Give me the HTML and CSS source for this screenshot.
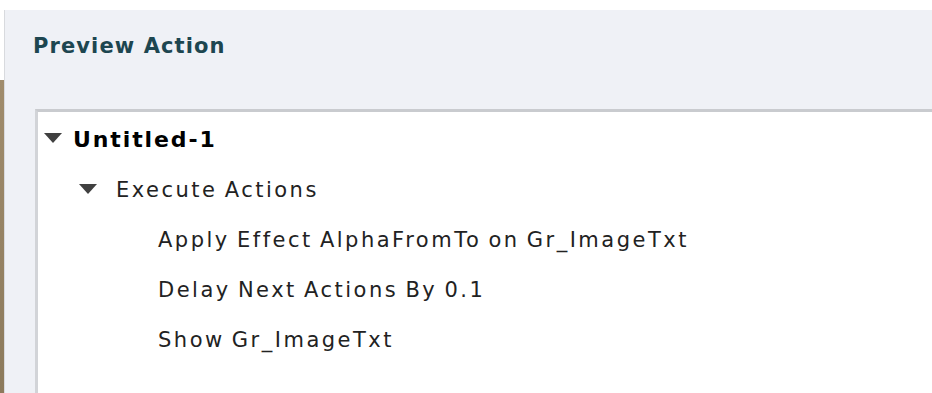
FILE: index.html
```html
<!DOCTYPE html>
<html lang="en">
<head>
  <meta charset="UTF-8">
  <title>Preview Action</title>
  <link rel="stylesheet" href="styles.css">
</head>
<body>
  <div class="edge"></div>
  <div class="panel">
    <h2 class="title">Preview Action</h2>
    <div class="tree">
      <div class="node root">
        <span class="caret"></span>
        <span class="label">Untitled-1</span>
      </div>
      <div class="node group">
        <span class="caret"></span>
        <span class="label">Execute Actions</span>
      </div>
      <div class="node leaf"><span class="label">Apply Effect AlphaFromTo on Gr_ImageTxt</span></div>
      <div class="node leaf"><span class="label">Delay Next Actions By 0.1</span></div>
      <div class="node leaf"><span class="label">Show Gr_ImageTxt</span></div>
    </div>
  </div>
</body>
</html>
```

FILE: styles.css
```css
html, body {
  margin: 0;
  height: 100%;
  overflow: hidden;
}
body {
  display: flex;
  background: #fff;
  font-family: "DejaVu Sans", Verdana, sans-serif;
}
.edge {
  width: 4px;
  margin-top: 80px;
  background: linear-gradient(#a08c6c, #8c7a5c);
  flex-shrink: 0;
}
.panel {
  flex: 1;
  margin-top: 10px;
  border-left: 1px solid #d8dade;
  background: #eff1f6;
  padding-left: 30px;
  display: flex;
  flex-direction: column;
}
.title {
  margin: 0 0 0 -2px;
  padding-top: 24px;
  height: 99px;
  box-sizing: border-box;
  font-size: 21px;
  line-height: 24px;
  letter-spacing: 1.1px;
  font-weight: bold;
  color: #1d4650;
}
.tree {
  flex: 1;
  background: #fff;
  border-top: 3px solid #c9cbcf;
  border-left: 3px solid #d2d4d8;
  padding-top: 3px;
}
.node {
  display: flex;
  align-items: center;
  height: 50px;
  line-height: 50px;
  font-size: 21px;
  letter-spacing: 2.5px;
  word-spacing: -2px;
  color: #222;
}
.caret {
  width: 0;
  height: 0;
  border-left: 9px solid transparent;
  border-right: 9px solid transparent;
  border-top: 10px solid #404040;
}
.root {
  padding-left: 6px;
}
.root .caret {
  margin: 0 11px 4px 0;
}
.root .label {
  font-size: 22px;
  letter-spacing: 1.9px;
  font-weight: bold;
  color: #000;
}
.group {
  padding-left: 41px;
}
.group .caret {
  margin: 0 19px 2px 0;
}
.leaf {
  padding-left: 120px;
}
```
